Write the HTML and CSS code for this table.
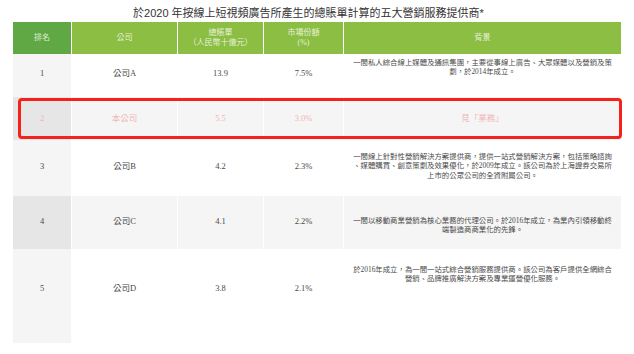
FILE: index.html
```html
<!DOCTYPE html>
<html lang="zh-Hant">
<head>
<meta charset="utf-8">
<title>五大營銷服務提供商</title>
<link rel="stylesheet" href="styles.css">
</head>
<body>
<div class="page">
  <h1 class="title">於2020 年按線上短視頻廣告所產生的總賬單計算的五大營銷服務提供商*</h1>
  <div class="table">
    <div class="row head">
      <div class="cell rank">排名</div>
      <div class="cell">公司</div>
      <div class="cell">總賬單<br>（人民幣十億元）</div>
      <div class="cell">市場份額<br>(%)</div>
      <div class="cell">背景</div>
    </div>
    <div class="row r1">
      <div class="cell rank">1</div>
      <div class="cell">公司A</div>
      <div class="cell">13.9</div>
      <div class="cell">7.5%</div>
      <div class="cell bg">一間私人綜合線上媒體及通訊集團，主要從事線上廣告、大眾媒體以及營銷及策<br>劃，於2014年成立。</div>
    </div>
    <div class="row r2 shade mine">
      <div class="cell rank">2</div>
      <div class="cell">本公司</div>
      <div class="cell">5.5</div>
      <div class="cell">3.0%</div>
      <div class="cell">見「業務」</div>
      <div class="frame"></div>
    </div>
    <div class="row r3">
      <div class="cell rank">3</div>
      <div class="cell">公司B</div>
      <div class="cell">4.2</div>
      <div class="cell">2.3%</div>
      <div class="cell bg">一間線上針對性營銷解決方案提供商，提供一站式營銷解決方案，包括策略諮詢<br>、媒體購買、創意策劃及效果優化，於2009年成立。該公司為於上海證券交易所<br>上市的公眾公司的全資附屬公司。</div>
    </div>
    <div class="row r4 shade">
      <div class="cell rank">4</div>
      <div class="cell">公司C</div>
      <div class="cell">4.1</div>
      <div class="cell">2.2%</div>
      <div class="cell bg">一間以移動商業營銷為核心業務的代理公司。於2016年成立，為業內引領移動終<br>端製造商商業化的先鋒。</div>
    </div>
    <div class="row r5">
      <div class="cell rank">5</div>
      <div class="cell">公司D</div>
      <div class="cell">3.8</div>
      <div class="cell">2.1%</div>
      <div class="cell bg">於2016年成立，為一間一站式綜合營銷服務提供商。該公司為客戶提供全網綜合<br>營銷、品牌推廣解決方案及專業運營優化服務。</div>
    </div>
  </div>
</div>
</body>
</html>
```
FILE: styles.css
```css
html, body {
  margin: 0;
  background: #fff;
}
body {
  font-family: "Liberation Serif", "Noto Sans CJK TC", serif;
  color: #4a4a4a;
}
.page {
  padding: 0 13px;
}
.title {
  margin: 0;
  height: 22px;
  line-height: 27px;
  font-family: "Liberation Sans", "Noto Sans CJK TC", sans-serif;
  font-size: 11px;
  font-weight: normal;
  color: #333;
  text-align: center;
  padding-right: 17px;
  white-space: nowrap;
}
.table {
  width: 608px;
}
.row {
  display: grid;
  grid-template-columns: 58px 105px 85px 79px 277px;
  column-gap: 1px;
  background: #fff;
}
.cell {
  display: flex;
  justify-content: center;
  align-items: flex-start;
  text-align: center;
  font-size: 8.5px;
  line-height: 10px;
  padding-top: var(--pad);
}
.cell.bg {
  font-size: 7.4px;
  line-height: 9.3px;
  padding: var(--padbg) 4px 0;
}
.rank {
  background: #f5f5f5;
}
.head {
  height: 32px;
}
.head .cell {
  background: #8cbe43;
  color: rgba(255, 255, 255, 0.8);
  align-items: center;
  font-size: 8px;
  line-height: 10px;
  padding: 0;
}
.head .rank {
  background: #5fa843;
}
.shade .cell {
  background: #f5f5f5;
}
.shade .rank {
  background: #e6e6e6;
}
.r1 { height: 43px; --pad: 14px; --padbg: 4px; }
.r2 { height: 43px; --pad: 16px; }
.r3 { height: 56px; --pad: 21px; --padbg: 12px; }
.r4 { height: 53px; --pad: 20px; --padbg: 20px; }
.r5 { height: 94px; --pad: 34px; --padbg: 16px; }
.mine {
  position: relative;
  color: #f0b6b6;
}
.frame {
  position: absolute;
  left: 5px;
  right: -1px;
  top: 1px;
  bottom: 1px;
  border: 3px solid #f5211b;
  border-radius: 4px;
}
```
